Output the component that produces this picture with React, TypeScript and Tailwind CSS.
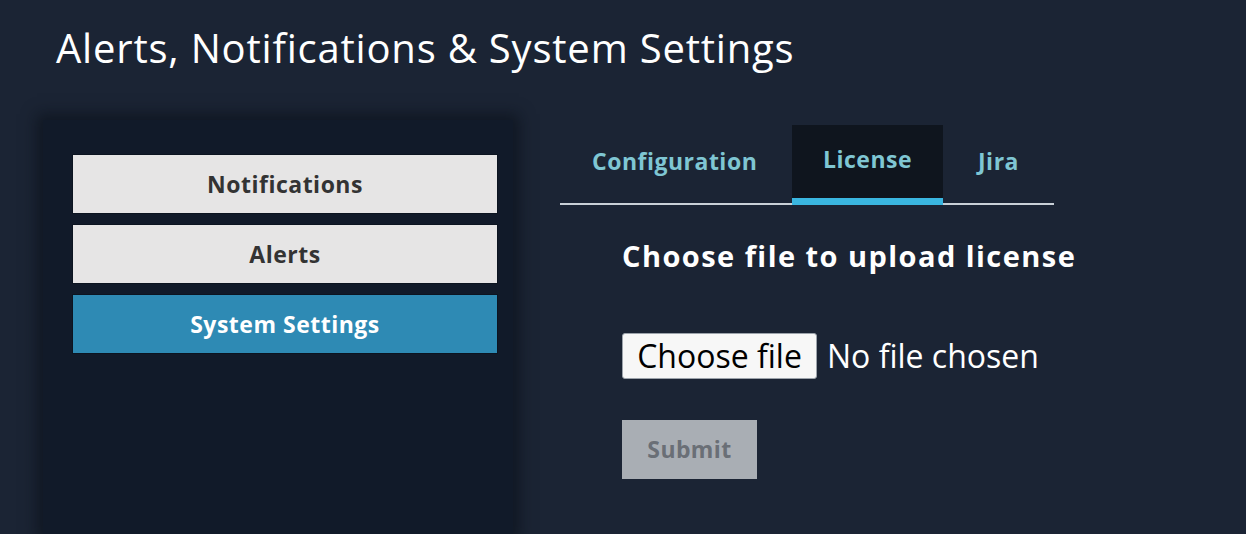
import React from "react";

const NAV = ["Notifications", "Alerts", "System Settings"];
const TABS = [
  { label: "Configuration", w: "w-[232px]", pad: "pl-[32px]" },
  { label: "License", w: "w-[151px]", pad: "justify-center" },
  { label: "Jira", w: "w-[111px]", pad: "pl-[35px]" },
];

export default function App() {
  const activeNav = "System Settings";
  const activeTab = "License";

  return (
    <div className="flex h-[534px] w-[1246px] flex-col overflow-hidden bg-[#1b2434] font-['Open_Sans',sans-serif] text-white">
      <h1 className="whitespace-nowrap pl-[56px] pt-[24px] text-[40px] leading-[48px] font-normal tracking-[0.8px]">
        Alerts, Notifications &amp; System Settings
      </h1>

      <div className="mt-[48px] flex flex-1">
        {/* side nav */}
        <nav className="ml-[43px] flex w-[470px] flex-col gap-[10px] bg-[#111a29] pl-[29px] pr-[15px] pt-[34px] shadow-[0_0_14px_6px_rgba(8,12,20,0.55)]">
          {NAV.map((item) => (
            <button
              key={item}
              className={
                item === activeNav
                  ? "h-[60px] border border-[#0c1420] bg-[#2e8ab4] text-[23px] font-bold tracking-[0.5px] text-white"
                  : "h-[60px] border border-[#0c1420] bg-[#e6e5e5] text-[23px] font-bold tracking-[0.5px] text-[#333333]"
              }
            >
              {item}
            </button>
          ))}
        </nav>

        {/* content */}
        <section className="ml-[47px] flex w-[494px] flex-col">
          <div className="flex h-[85px] border-b-2 border-[#c9d0d7]">
            {TABS.map((t) =>
              t.label === activeTab ? (
                <div
                  key={t.label}
                  className={`${t.w} mt-[5px] mb-[-2px] flex items-start justify-center border-b-[7px] border-[#3ab6e0] bg-[#0f151e] pt-[17px] text-[23px] font-bold tracking-[0.5px] text-[#7fc6d3]`}
                >
                  {t.label}
                </div>
              ) : (
                <div
                  key={t.label}
                  className={`${t.w} ${t.pad} flex items-start pt-[24px] text-[23px] font-bold tracking-[0.5px] text-[#7fc6d3]`}
                >
                  {t.label}
                </div>
              )
            )}
          </div>

          <div className="pl-[62px]">
            <h2 className="mt-[31px] whitespace-nowrap text-[29px] leading-[40px] font-bold tracking-[1.45px]">
              Choose file to upload license
            </h2>

            <div className="mt-[57px] flex items-center gap-[10px]">
              <span className="flex h-[46px] w-[195px] items-center justify-center rounded-[3px] border border-[#9ca3ab] bg-[#f7f7f7] text-[32px] leading-[40px] text-black">
                Choose file
              </span>
              <span className="whitespace-nowrap text-[32px] leading-[40px] text-white">No file chosen</span>
            </div>

            <button className="mt-[41px] h-[59px] w-[135px] bg-[#a9aeb4] text-[23px] font-bold tracking-[0.4px] text-[#6a6f76]">
              Submit
            </button>
          </div>
        </section>
      </div>
    </div>
  );
}
